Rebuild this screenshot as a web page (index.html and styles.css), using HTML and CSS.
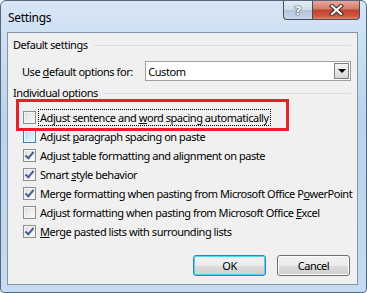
FILE: index.html
```html
<!DOCTYPE html>
<html lang="en">
<head>
  <meta charset="UTF-8">
  <title>Settings</title>
  <link rel="stylesheet" href="styles.css">
</head>
<body>
  <div class="window">
    <!-- Title bar -->
    <div class="titlebar">
      <span class="title">Settings</span>
      <div class="controls">
        <button class="ctl help">?</button>
        <button class="ctl close">
          <svg width="15" height="12" viewBox="0 0 15 12">
            <path d="M3 2 L12 10 M12 2 L3 10" stroke="#3b2a2a" stroke-width="4.2" stroke-linecap="square"/>
            <path d="M3 2 L12 10 M12 2 L3 10" stroke="#fff" stroke-width="2.2" stroke-linecap="square"/>
          </svg>
        </button>
      </div>
    </div>

    <!-- Client area -->
    <div class="client">
      <div class="group">
        <span>Default settings</span>
        <div class="rule"></div>
      </div>
      <div class="default-row">
        <span class="label">Use <u>d</u>efault options for:</span>
        <div class="combo">
          <span>Custom</span>
          <div class="drop"><i></i></div>
        </div>
      </div>

      <div class="group group-2">
        <span>Individual options</span>
        <div class="rule"></div>
      </div>
      <ul class="options">
        <li><span class="box"></span><span class="text focus">Adjust sentence and <u>w</u>ord spacing automatically</span></li>
        <li><span class="box hover"></span><span class="text">Adjust <u>p</u>aragraph spacing on paste</span></li>
        <li><span class="box checked"></span><span class="text">Adjust <u>t</u>able formatting and alignment on paste</span></li>
        <li><span class="box checked"></span><span class="text">Smart <u>s</u>tyle behavior</span></li>
        <li><span class="box checked"></span><span class="text">Merge formatting when pasting from Microsoft Office P<u>o</u>werPoint</span></li>
        <li><span class="box"></span><span class="text">Adjust formatting when pasting from Microsoft Office <u>E</u>xcel</span></li>
        <li><span class="box checked"></span><span class="text"><u>M</u>erge pasted lists with surrounding lists</span></li>
      </ul>

      <div class="buttons">
        <button class="btn default">OK</button>
        <button class="btn">Cancel</button>
      </div>

      <!-- annotation -->
      <div class="highlight"></div>
    </div>
  </div>
</body>
</html>
```

FILE: styles.css
```css
/* General Styles */
body {
  margin: 0;
  padding: 0;
  background: #fff;
  font-family: "Noto Sans", sans-serif;
  font-size: 11px;
  letter-spacing: -0.45px;
  color: #000;
  white-space: nowrap;
}
.window {
  width: 367px;
  height: 293px;
  box-sizing: border-box;
  padding: 0 8px 7px 6px;
  display: flex;
  flex-direction: column;
  border: 1px solid #55677c;
  border-radius: 6px 6px 4px 4px;
  background: linear-gradient(#d7e6f6, #bcd3ec 40%, #c6dbf1);
}

/* Title bar */
.titlebar {
  height: 31px;
  display: flex;
  align-items: flex-start;
}
.title {
  margin-top: 8px;
  margin-left: 1px;
  font-size: 12px;
  letter-spacing: -0.3px;
}
.controls {
  margin-left: auto;
  margin-right: -2px;
  display: flex;
}
.ctl {
  height: 19px;
  border: 1px solid #3f5068;
  border-top: none;
  padding: 0;
  display: flex;
  align-items: center;
  justify-content: center;
}
.help {
  width: 29px;
  border-radius: 0 0 0 4px;
  border-right: none;
  background: linear-gradient(#e4ecf5, #cfdbe8 50%, #b5c6d9 51%, #c8d6e6);
  color: #fff;
  font-family: "DejaVu Sans", sans-serif;
  font-weight: bold;
  font-size: 13px;
  text-shadow: 0 0 1px #2b3a4c, 0 0 1px #2b3a4c, 0 0 1px #2b3a4c;
}
.close {
  width: 48px;
  border-radius: 0 0 4px 0;
  background: linear-gradient(#e8a89c, #d57a6a 45%, #c2402c 50%, #cf5a44 85%, #e2846c);
}

/* Client area */
.client {
  flex: 1;
  position: relative;
  background: #f0f0f0;
  border: 1px solid #8696a8;
  padding: 4px 6px 0 0;
  display: flex;
  flex-direction: column;
}
.group {
  display: flex;
  align-items: center;
  gap: 6px;
  line-height: 16px;
  padding-left: 5px;
}
.group .rule {
  flex: 1;
  height: 1px;
  background: #d5dfe5;
}
.group-2 {
  margin-top: 4px;
}
.default-row {
  display: flex;
  align-items: center;
  margin-top: 8px;
  padding-left: 14px;
}
.default-row .label {
  width: 124px;
}
.combo {
  width: 207px;
  height: 20px;
  box-sizing: border-box;
  border: 1px solid #a0a0a0;
  background: #fff;
  display: flex;
  align-items: center;
  padding-left: 2px;
}
.combo span {
  flex: 1;
}
.drop {
  width: 15px;
  height: 16px;
  margin-right: 1px;
  border: 1px solid #7f7f7f;
  box-sizing: border-box;
  background: linear-gradient(#f4f4f4, #e6e6e6 50%, #d6d6d6);
  display: flex;
  align-items: center;
  justify-content: center;
}
.drop i {
  border-left: 4px solid transparent;
  border-right: 4px solid transparent;
  border-top: 4px solid #000;
}

/* Options */
.options {
  list-style: none;
  margin: 7px 0 0;
  padding: 0 0 0 15px;
}
.options li {
  height: 19px;
  display: flex;
  align-items: center;
}
.box {
  flex: none;
  width: 13px;
  height: 13px;
  box-sizing: border-box;
  border: 1px solid #8f8f8f;
  background: linear-gradient(135deg, #dcdcdc, #fff);
  box-shadow: inset 0 0 0 1px #f4f4f4;
  margin-right: 2px;
  position: relative;
}
.box.hover {
  border-color: #3c7fb1;
  background: linear-gradient(135deg, #b9ddf6, #eaf6fd);
}
.box.checked::after {
  content: "";
  position: absolute;
  left: 3px;
  top: 0px;
  width: 3px;
  height: 7px;
  border-right: 2px solid #4a5f97;
  border-bottom: 2px solid #4a5f97;
  transform: rotate(40deg);
}
.text {
  padding: 0 1px;
  border: 1px dotted transparent;
}
.text.focus {
  border-color: #000;
}

/* Buttons */
.buttons {
  display: flex;
  justify-content: flex-end;
  gap: 11px;
  margin-top: 14px;
  padding-right: 1px;
}
.btn {
  width: 73px;
  height: 21px;
  font-family: inherit;
  font-size: 11px;
  letter-spacing: inherit;
  border: 1px solid #707070;
  border-radius: 3px;
  background: linear-gradient(#f2f2f2, #ebebeb 50%, #dddddd 51%, #cfcfcf);
  box-shadow: inset 0 0 0 1px #fcfcfc;
}
.btn.default {
  border-color: #3c7fb1;
  box-shadow: inset 0 0 0 1px #48d8fb;
}

/* Annotation overlay */
.highlight {
  position: absolute;
  left: 8px;
  top: 66px;
  width: 273px;
  height: 32px;
  box-sizing: border-box;
  border: 3px solid #e3212b;
}
```
